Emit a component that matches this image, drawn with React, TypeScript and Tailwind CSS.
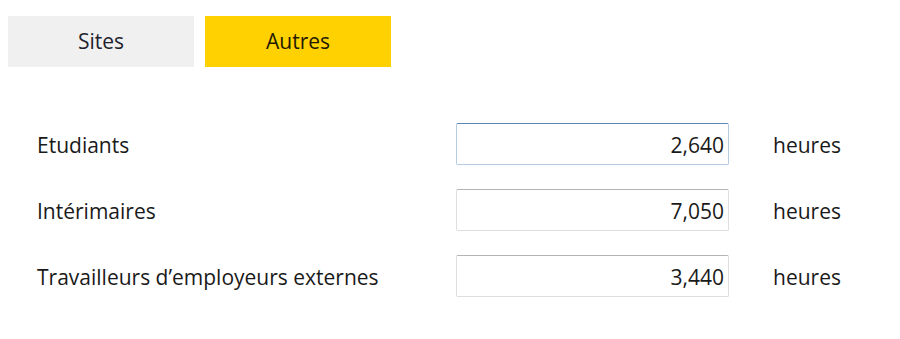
const ROWS = [
  { label: "Etudiants", value: "2,640", focused: true },
  { label: "Intérimaires", value: "7,050", focused: false },
  { label: "Travailleurs d’employeurs externes", value: "3,440", focused: false },
];

export default function App() {
  return (
    <div
      className="w-[900px] h-[339px] bg-white text-[#1a1a1a]"
      style={{ fontFamily: '"Open Sans", "Noto Sans", sans-serif' }}
    >
      {/* Tabs */}
      <div className="flex gap-[11px] pl-2 pt-4">
        <button className="w-[186px] h-[51px] bg-[#f0f0f0] text-[21px] text-[#1f1f2e]">
          Sites
        </button>
        <button className="w-[186px] h-[51px] bg-[#ffd100] text-[21px] text-[#1f1a00]">
          Autres
        </button>
      </div>

      {/* Hours form */}
      <div className="flex flex-col gap-[24px] pt-[56px] pl-[37px]">
        {ROWS.map(row => (
          <div key={row.label} className="flex items-center h-[42px] text-[21px] leading-none">
            <span className="w-[419px] pt-[3px]">{row.label}</span>
            <div
              className={
                row.focused
                  ? "w-[273px] h-[42px] rounded-[2px] border border-[#b5cbe3] border-t-[#5a86b8] flex items-center justify-end pr-1 pt-[3px]"
                  : "w-[273px] h-[42px] rounded-[2px] border border-[#dedede] border-t-[#b4b4b4] flex items-center justify-end pr-1 pt-[3px]"
              }
            >
              {row.value}
            </div>
            <span className="ml-[44px] pt-[3px]">heures</span>
          </div>
        ))}
      </div>
    </div>
  );
}
